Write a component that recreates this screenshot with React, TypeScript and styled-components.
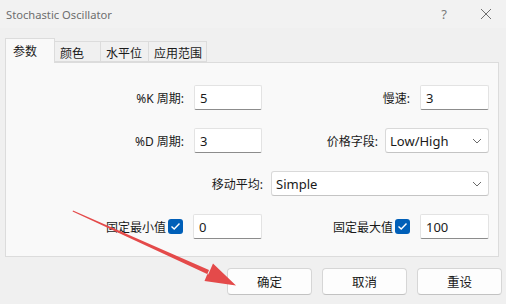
import React from "react";
import styled, { createGlobalStyle } from "styled-components";

const Global = createGlobalStyle`
  html, body { margin: 0; padding: 0; background: #f0f0f0; }
  body { font-family: "Noto Sans", "Noto Sans CJK SC", sans-serif; color: #1b1b1b; }
  * { box-sizing: border-box; }
`;

const Window = styled.div`
  position: relative;
  width: 506px;
  height: 304px;
  background: #f0f0f0;
  overflow: hidden;
  display: flex;
  flex-direction: column;
`;

const TitleBar = styled.div`
  height: 28px;
  flex: none;
  display: flex;
  align-items: center;
  padding-left: 6px;
  background: #f2f2f2;
`;

const Title = styled.div`
  flex: 1;
  font-size: 11.2px;
  color: #6e6e6e;
  font-family: "Noto Sans", sans-serif;
`;

const TitleButton = styled.div<{ $w: number }>`
  width: ${(p) => p.$w}px;
  height: 28px;
  display: flex;
  align-items: center;
  justify-content: center;
  color: #7a7a7a;
  font-size: 13px;
`;

const Body = styled.div`
  flex: 1;
  display: flex;
  flex-direction: column;
  padding: 10px 7px 0 5px;
`;

const TabStrip = styled.div`
  display: flex;
  align-items: flex-end;
  height: 24px;
  position: relative;
  z-index: 1;
`;

const Tab = styled.div<{ $active?: boolean; $w: number }>`
  width: ${(p) => p.$w}px;
  height: ${(p) => (p.$active ? 25 : 21)}px;
  margin-bottom: ${(p) => (p.$active ? -1 : 0)}px;
  padding: ${(p) => (p.$active ? "0 0 1px 7px" : "1px 0 0 5px")};
  display: flex;
  align-items: center;
  font-size: 12px;
  font-family: "Noto Sans CJK SC", sans-serif;
  color: #1a1a1a;
  background: ${(p) => (p.$active ? "#f9f9f9" : "#f0f0f0")};
  border: 1px solid #dcdcdc;
  border-bottom: ${(p) => (p.$active ? "none" : "1px solid #dcdcdc")};
  border-left: ${(p) => (p.$active ? "1px solid #dcdcdc" : "none")};
`;

const Panel = styled.div`
  height: 195px;
  background: #f9f9f9;
  border: 1px solid #dcdcdc;
  padding: 22px 10px 0 0;
  display: grid;
  grid-template-columns: 256px 227px;
  grid-auto-rows: 25px;
  row-gap: 18px;
`;

const Cell = styled.div<{ $span?: boolean; $gap?: number }>`
  display: flex;
  align-items: center;
  justify-content: flex-end;
  gap: ${(p) => p.$gap ?? 10}px;
  grid-column: ${(p) => (p.$span ? "1 / -1" : "auto")};
`;

const Label = styled.span`
  font-size: 12px;
  font-family: "Noto Sans", "Noto Sans CJK SC", sans-serif;
  color: #1a1a1a;
  white-space: nowrap;
`;

const Input = styled.div<{ $w: number }>`
  width: ${(p) => p.$w}px;
  height: 25px;
  background: #ffffff;
  border: 1px solid #e3e3e3;
  border-bottom: 1px solid #8c8c8c;
  border-radius: 2px;
  padding: 0 5px;
  display: flex;
  align-items: center;
  font-size: 13px;
  color: #1a1a1a;
`;

const Select = styled.div<{ $w: number }>`
  width: ${(p) => p.$w}px;
  height: 25px;
  background: #ffffff;
  border: 1px solid #d9d9d9;
  border-bottom-color: #c4c4c4;
  border-radius: 3px;
  padding: 0 6px 0 4px;
  display: flex;
  align-items: center;
  justify-content: space-between;
  font-size: 13px;
  color: #1a1a1a;
`;

const CheckGroup = styled.div`
  display: flex;
  align-items: center;
  gap: 2px;
`;

const CheckBox = styled.div`
  width: 15px;
  height: 15px;
  border-radius: 3px;
  background: #005fb8;
  display: flex;
  align-items: center;
  justify-content: center;
`;

const ButtonRow = styled.div`
  display: flex;
  justify-content: flex-end;
  gap: 10px;
  padding-top: 11px;
  margin-right: -3px;
`;

const Button = styled.div`
  width: 85px;
  height: 27px;
  background: #fdfdfd;
  border: 1px solid #d6d6d6;
  border-bottom-color: #c2c2c2;
  border-radius: 4px;
  display: flex;
  align-items: center;
  justify-content: center;
  font-size: 12.5px;
  font-family: "Noto Sans CJK SC", sans-serif;
  color: #1a1a1a;
`;

const ArrowLayer = styled.svg`
  position: absolute;
  left: 0;
  top: 0;
  pointer-events: none;
`;

const Chevron = () => (
  <svg width="10" height="6" viewBox="0 0 10 6">
    <path d="M1 1 L5 5 L9 1" fill="none" stroke="#6a6a6a" strokeWidth="1" />
  </svg>
);

const Check = () => (
  <svg width="11" height="9" viewBox="0 0 11 9">
    <path d="M1.5 4.5 L4.2 7 L9.5 1.5" fill="none" stroke="#ffffff" strokeWidth="1.4" />
  </svg>
);

export default function App() {
  return (
    <>
      <Global />
      <Window>
        <TitleBar>
          <Title>Stochastic Oscillator</Title>
          <TitleButton $w={44}>?</TitleButton>
          <TitleButton $w={40}>
            <svg width="12" height="12" viewBox="0 0 12 12">
              <path d="M1 1 L11 11 M11 1 L1 11" stroke="#6f6f6f" strokeWidth="1" />
            </svg>
          </TitleButton>
        </TitleBar>
        <Body>
          <TabStrip>
            <Tab $active $w={50}>参数</Tab>
            <Tab $w={46}>颜色</Tab>
            <Tab $w={48}>水平位</Tab>
            <Tab $w={58}>应用范围</Tab>
          </TabStrip>
          <Panel>
            <Cell>
              <Label>%K 周期:</Label>
              <Input $w={68}>5</Input>
            </Cell>
            <Cell>
              <Label>慢速:</Label>
              <Input $w={69}>3</Input>
            </Cell>
            <Cell>
              <Label>%D 周期:</Label>
              <Input $w={68}>3</Input>
            </Cell>
            <Cell $gap={7}>
              <Label>价格字段:</Label>
              <Select $w={104}>
                Low/High
                <Chevron />
              </Select>
            </Cell>
            <Cell $span $gap={8}>
              <Label>移动平均:</Label>
              <Select $w={218}>
                Simple
                <Chevron />
              </Select>
            </Cell>
            <Cell>
              <CheckGroup>
                <Label>固定最小值</Label>
                <CheckBox>
                  <Check />
                </CheckBox>
              </CheckGroup>
              <Input $w={69}>0</Input>
            </Cell>
            <Cell>
              <CheckGroup>
                <Label>固定最大值</Label>
                <CheckBox>
                  <Check />
                </CheckBox>
              </CheckGroup>
              <Input $w={69}>100</Input>
            </Cell>
          </Panel>
          <ButtonRow>
            <Button>确定</Button>
            <Button>取消</Button>
            <Button>重设</Button>
          </ButtonRow>
        </Body>
        <ArrowLayer width="506" height="304" viewBox="0 0 506 304">
          <polygon
            points="73,210.5 209,270 204.5,281 236,285.5 213,263.5 208.2,274.5 72.6,211.5"
            fill="#e44a4a"
          />
        </ArrowLayer>
      </Window>
    </>
  );
}
